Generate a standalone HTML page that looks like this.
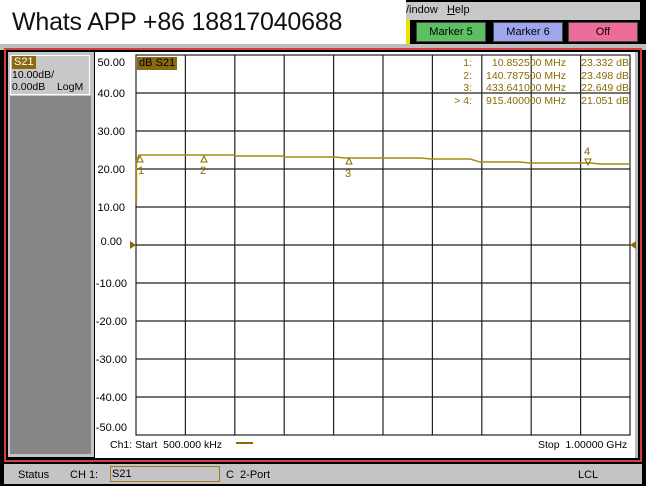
<!DOCTYPE html>
<html><head><meta charset="utf-8"><style>
*{margin:0;padding:0;box-sizing:border-box}
body{width:646px;height:486px;background:#000;position:relative;overflow:hidden;font-family:"Liberation Sans",Arial,sans-serif;font-size:11px;color:#000}
.a{position:absolute}
.btn{position:absolute;top:22px;height:20px;border:1px solid #444;text-align:center;line-height:18px;font-size:11px}
.m{color:#8a6a00;font-size:10.5px;position:absolute;white-space:pre;line-height:12.5px;text-align:right}
</style></head><body>
<div class="a" style="left:400px;top:2px;width:240px;height:18px;background:#c8c8c8"></div>
<div class="a" style="left:406px;top:4px;font-size:11px">/indow &nbsp;&nbsp;<u>H</u>elp</div>
<div class="a" style="left:340px;top:20px;width:70px;height:24px;background:#f0e000"></div>
<div class="btn" style="left:416px;width:70px;background:#5cbf62">Marker 5</div>
<div class="btn" style="left:493px;width:70px;background:#9ea6ee">Marker 6</div>
<div class="btn" style="left:568px;width:70px;background:#ee6c9c">Off</div>
<div class="a" style="left:0;top:0;width:406px;height:44px;background:#fff"></div>
<div class="a" style="left:12px;top:8px;font-size:25px;color:#111;letter-spacing:-0.2px">Whats APP +86 18817040688</div>
<div class="a" style="left:0;top:44px;width:646px;height:6px;background:#bdbdbd"></div>
<div class="a" style="left:4px;top:48px;width:638px;height:414px;border:2px solid #d04040;background:#000"></div>
<div class="a" style="left:8px;top:52px;width:86px;height:405px;background:#c4c4c4"></div>
<div class="a" style="left:10px;top:55px;width:80px;height:40px;background:#c8c8c8;border:1px solid #fff"></div>
<div class="a" style="left:12px;top:56px;background:#8a6a10;color:#fff;padding:0 2px;font-size:11px;line-height:13px">S21</div>
<div class="a" style="left:12px;top:69px;font-size:10.5px;line-height:12px">10.00dB/<br>0.00dB&nbsp;&nbsp;&nbsp;&nbsp;LogM</div>
<div class="a" style="left:10px;top:96px;width:81px;height:358px;background:#878787"></div>
<div class="a" style="left:95px;top:52px;width:542px;height:406px;background:#fff"></div>
<div class="a" style="left:635px;top:52px;width:3px;height:406px;background:#bbb"></div>
<svg class="a" style="left:0;top:0" width="646" height="486">
<g stroke="#222" stroke-width="1.2" fill="none">
<rect x="136" y="55" width="494" height="380"/>
<path d="M185.4 55V435M234.8 55V435M284.2 55V435M333.6 55V435M383 55V435M432.4 55V435M481.8 55V435M531.2 55V435M580.6 55V435
M136 93H630M136 131H630M136 169H630M136 207H630M136 245H630M136 283H630M136 321H630M136 359H630M136 397H630"/>
</g>
<g font-size="11" fill="#000" font-family="Liberation Sans,Arial,sans-serif" text-anchor="end">
<text x="125" y="66">50.00</text><text x="125" y="97">40.00</text><text x="125" y="135">30.00</text>
<text x="125" y="173">20.00</text><text x="125" y="211">10.00</text><text x="122" y="245">0.00</text>
<text x="127" y="287">-10.00</text><text x="127" y="325">-20.00</text><text x="127" y="363">-30.00</text>
<text x="127" y="401">-40.00</text><text x="127" y="431">-50.00</text>
</g>
<path d="M136.5 204V160L139 155H234L236 156H283L285 157H320L335 157L345 158H382L390 158H420L432 159H470L480 162H520L530 163H560L570 163H590L600 164H630" stroke="#a88c10" stroke-width="1.4" fill="none"/>
<g stroke="#8a6a00" fill="none" stroke-width="1">
<path d="M137 162L140 156L143 162Z"/><path d="M201 162L204 156L207 162Z"/><path d="M346 164L349 158L352 164Z"/><path d="M585 159L588 165L591 159Z"/>
</g>
<g fill="#8a6a00" font-size="11" font-family="Liberation Sans,Arial,sans-serif">
<text x="138" y="174">1</text><text x="200" y="174">2</text><text x="345" y="177">3</text><text x="584" y="155">4</text>
</g>
<path d="M130 241L136 245L130 249Z" fill="#8a6a00"/><path d="M636 241L630 245L636 249Z" fill="#8a6a00"/>
<path d="M236 443H253" stroke="#8a6a00" stroke-width="2"/>
</svg>
<div class="a" style="left:137px;top:57px;background:#8a6a10;color:#000;padding:0 2px;font-size:11px;line-height:13px">dB S21</div>
<div class="m" style="left:440px;top:57px;width:32px">1:
2:
3:
&gt; 4:</div>
<div class="m" style="left:482px;top:57px;width:84px">10.852500 MHz
140.787500 MHz
433.641000 MHz
915.400000 MHz</div>
<div class="m" style="left:575px;top:57px;width:54px">23.332 dB
23.498 dB
22.649 dB
21.051 dB</div>
<div class="a" style="left:110px;top:439px;font-size:10.5px">Ch1: Start&nbsp; 500.000 kHz</div>
<div class="a" style="left:538px;top:439px;font-size:10.5px">Stop&nbsp; 1.00000 GHz</div>
<div class="a" style="left:4px;top:464px;width:638px;height:20px;background:#c4c4c4"></div>
<div class="a" style="left:18px;top:469px">Status</div>
<div class="a" style="left:70px;top:469px">CH 1:</div>
<div class="a" style="left:110px;top:466px;width:110px;height:16px;border:1px solid #a07a20;padding-left:1px;line-height:14px">S21</div>
<div class="a" style="left:226px;top:469px">C&nbsp; 2-Port</div>
<div class="a" style="left:578px;top:469px">LCL</div>
</body></html>
